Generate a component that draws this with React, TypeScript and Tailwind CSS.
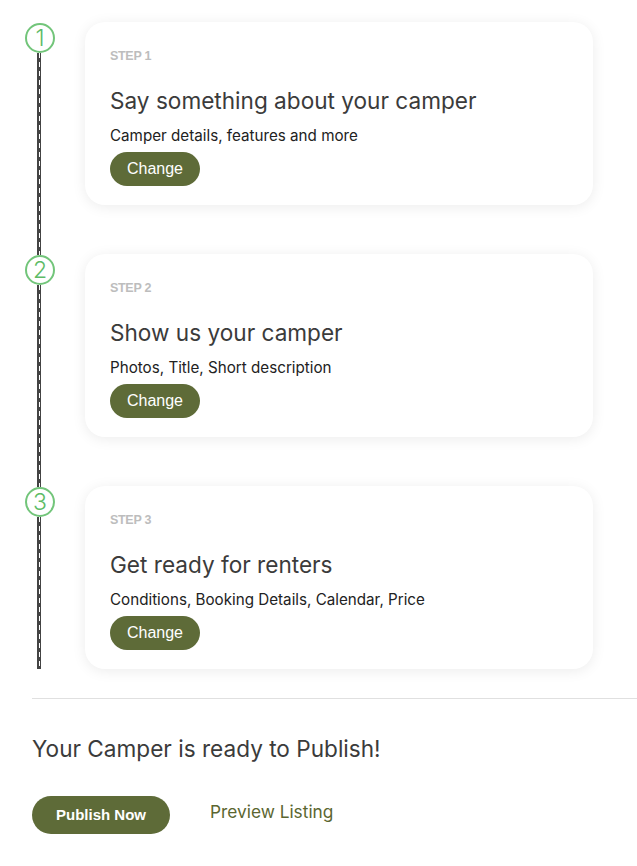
import React from "react";

const steps = [
  { n: "1", title: "Say something about your camper", sub: "Camper details, features and more" },
  { n: "2", title: "Show us your camper", sub: "Photos, Title, Short description" },
  { n: "3", title: "Get ready for renters", sub: "Conditions, Booking Details, Calendar, Price" },
];

function Line({ className = "" }: { className?: string }) {
  return (
    <div className={`w-[4px] bg-[#444444] flex ${className}`}>
      <div className="ml-[2px] w-px h-full bg-[repeating-linear-gradient(to_bottom,#ffffff_0px,#ffffff_5px,transparent_5px,transparent_9px)]" />
    </div>
  );
}

export default function App() {
  const font = { fontFamily: "Inter, 'Noto Sans', sans-serif" };
  const arial = { fontFamily: "'Liberation Sans', Arial, sans-serif" };
  return (
    <div className="w-[637px] min-h-[866px] bg-white pt-[22px]" style={font}>
      <div className="flex flex-col">
        {steps.map((s, i) => (
          <div key={s.n} className="flex">
            <div className="w-[85px] pl-[25px] flex flex-col items-start">
              <div className="w-[30px] flex flex-col items-center h-full">
                {i === 0 ? <div className="h-px" /> : <Line className="h-px ml-[-2px]" />}
                <div className="w-[30px] h-[30px] rounded-full border-2 border-[#72c57a] bg-white flex items-center justify-center text-[#5dbb66] text-[23px] font-light leading-none shrink-0">
                  {s.n}
                </div>
                <Line className="flex-1 ml-[-2px]" />
              </div>
            </div>
            <div className={i < 2 ? "pb-[49px]" : ""}>
              <div className="w-[508px] h-[183px] rounded-[20px] bg-white shadow-[0_2px_14px_rgba(0,0,0,0.08)] pl-[25px] pt-[26px] flex flex-col items-start">
                <div className="text-[12.5px] leading-[16px] font-bold text-[#bdbdbd] tracking-[-0.3px]" style={arial}>
                  STEP {s.n}
                </div>
                <div className="mt-[22px] text-[22.6px] leading-[30px] text-[#3b3b3b]">{s.title}</div>
                <div className="mt-[10px] text-[15.2px] leading-[20px] text-[#222]">{s.sub}</div>
                <button className="mt-[6px] w-[90px] h-[34px] rounded-full bg-[#5e6b38] text-white text-[16px]" style={arial}>
                  Change
                </button>
              </div>
            </div>
          </div>
        ))}
      </div>
      <div className="ml-[32px] mt-[29px] border-t border-[#e0e0e0]" />
      <div className="ml-[32px] mt-[35px] text-[22.6px] leading-[30px] text-[#3b3b3b]">
        Your Camper is ready to Publish!
      </div>
      <div className="ml-[32px] mt-[32px] flex items-center">
        <button className="w-[138px] h-[38px] rounded-full bg-[#5e6b38] text-white text-[15px] font-bold" style={arial}>
          Publish Now
        </button>
        <span className="ml-[40px] text-[17.3px] text-[#5b6630] -mt-[6px]">Preview Listing</span>
      </div>
    </div>
  );
}
